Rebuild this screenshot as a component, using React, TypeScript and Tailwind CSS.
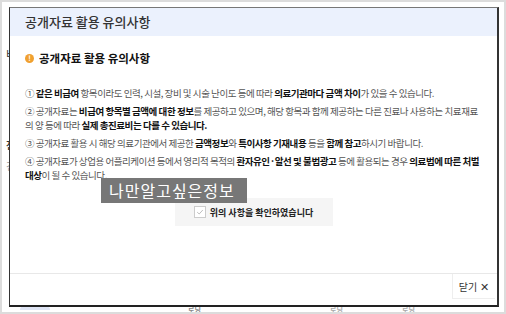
import React from "react";

const font = { fontFamily: '"Noto Sans CJK KR", "Noto Sans", sans-serif' };

const B = ({ children }: { children: React.ReactNode }) => (
  <b className="font-bold text-[#111]">{children}</b>
);

export default function App() {
  return (
    <div
      className="relative w-[506px] h-[314px] overflow-hidden bg-white border-2 border-[#dcdcdc]"
      style={font}
    >
      {/* page bits behind modal */}
      <div className="absolute left-[4px] top-[44px] text-[11px] text-[#333]">비</div>
      <div className="absolute left-[4px] top-[135px] text-[10px] font-bold text-[#333]">전</div>
      <div className="absolute left-[4px] top-[156px] text-[10px] text-[#999]">건</div>
      <div className="absolute left-[18px] top-[304px] w-[30px] h-[4px] rounded-t-full bg-[#dfe5f5]" />
      <div className="absolute left-[186px] top-[304px] text-[7px] leading-none text-[#888] font-bold">로딩</div>
      <div className="absolute left-[328px] top-[304px] text-[7px] leading-none text-[#aaa] font-bold">로딩</div>
      <div className="absolute left-[400px] top-[304px] text-[7px] leading-none text-[#aaa] font-bold">로딩</div>

      {/* modal */}
      <div className="absolute left-[7px] top-[5px] w-[490px] h-[300px] flex flex-col bg-white border border-[#777] border-l-[#333] border-r-2 border-r-[#333] border-b-2 border-b-[#222]">
        <div className="h-[28px] shrink-0 bg-[#ebf1fd] flex items-center pl-[15px] text-[13px] font-medium text-[#333]">
          공개자료 활용 유의사항
        </div>
        <div className="relative flex-1 px-[15px]">
          <div className="flex items-center gap-[5px] mt-[14px] text-[11.5px] font-bold text-[#111]">
            <span className="w-[9px] h-[9px] rounded-full bg-[#f0a030] text-white text-[7px] leading-none flex items-center justify-center font-bold">
              !
            </span>
            공개자료 활용 유의사항
          </div>
          <div className="mt-[19px] text-[9.5px] leading-[14px] text-[#555] tracking-[-0.45px] whitespace-nowrap">
            <p>
              ① <B>같은 비급여</B> 항목이라도 인력, 시설, 장비 및 시술 난이도 등에 따라 <B>의료기관마다 금액 차이</B>가 있을 수 있습니다.
            </p>
            <p className="mt-[4px]">
              ② 공개자료는 <B>비급여 항목별 금액에 대한 정보</B>를 제공하고 있으며, 해당 항목과 함께 제공하는 다른 진료나 사용하는 치료재료
              <br />의 양 등에 따라 <B>실제 총진료비는 다를 수 있습니다.</B>
            </p>
            <p className="mt-[4px]">
              ③ 공개자료 활용 시 해당 의료기관에서 제공한 <B>금액정보</B>와 <B>특이사항 기재내용</B> 등을 <B>함께 참고</B>하시기 바랍니다.
            </p>
            <p className="mt-[4px]">
              ④ 공개자료가 상업용 어플리케이션 등에서 영리적 목적의 <B>환자유인·알선 및 불법광고</B> 등에 활용되는 경우 <B>의료법에 따른 처벌</B>
              <br />
              <B>대상</B>이 될 수 있습니다.
            </p>
          </div>
          <div className="mt-[16px] mx-auto w-[158px] h-[28px] bg-[#f5f5f5] flex items-center justify-center gap-[4px]">
            <span className="w-[12px] h-[12px] border border-[#ccc] bg-white flex items-center justify-center">
              <svg width="8" height="8" viewBox="0 0 10 10" fill="none">
                <path d="M1.5 5.2 L4 7.5 L8.5 2.5" stroke="#bbb" strokeWidth="1.2" />
              </svg>
            </span>
            <span className="text-[9px] font-bold text-[#222]">위의 사항을 확인하였습니다</span>
          </div>
          {/* overlay label */}
          <div className="absolute left-[91px] top-[142px] w-[146px] h-[25px] bg-[#777] text-white text-[16px] leading-[25px] px-[8px] tracking-[1px]">
            나만알고싶은정보
          </div>
        </div>
        <div className="h-[32px] shrink-0 border-t border-[#e8e8e8] flex justify-end items-start pr-[2px]">
          <div className="w-[43px] h-[25px] border-l border-b border-[#eee] flex items-center justify-center gap-[3px] text-[10px] text-[#333]">
            닫기
            <span className="text-[11px] leading-none">✕</span>
          </div>
        </div>
      </div>
    </div>
  );
}
